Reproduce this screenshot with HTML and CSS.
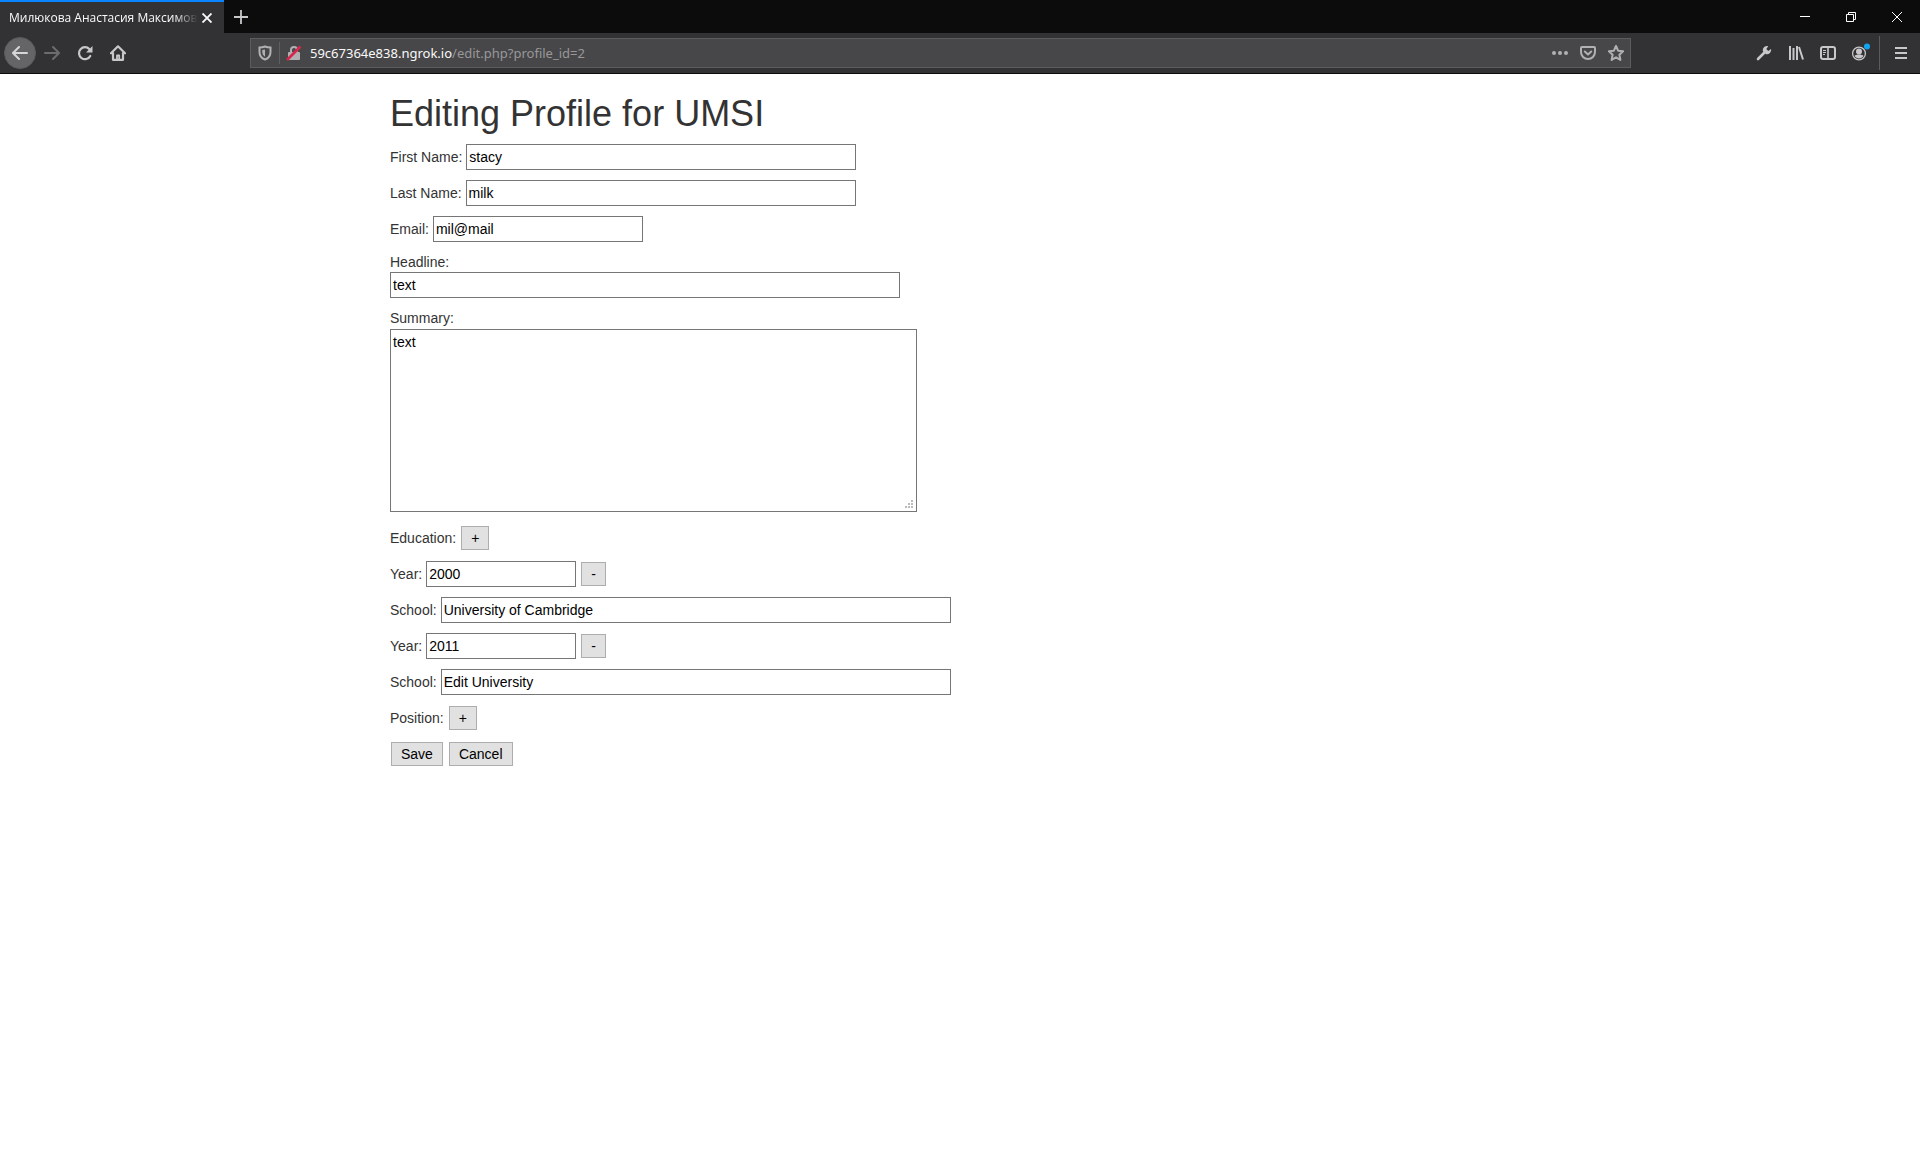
FILE: index.html
```html
<!DOCTYPE html>
<html lang="en">
<head>
<meta charset="utf-8">
<title>Милюкова Анастасия Максимовна</title>
<link rel="stylesheet" href="styles.css">
</head>
<body>
<header class="browser">
  <div class="tabbar">
    <div class="tab">
      <span class="tab-title">Милюкова Анастасия Максимовна</span>
      <button class="icon-btn tab-close" aria-label="Close tab"><svg width="10" height="10" viewBox="0 0 10 10"><path d="M.5.5l9 9M9.500.5l-9 9" stroke="#f9f9fa" stroke-width="1.900"/></svg></button>
    </div>
    <button class="icon-btn new-tab" aria-label="New tab"><svg width="14" height="14" viewBox="0 0 14 14"><path d="M7 0v14M0 7h14" stroke="#c8c8ca" stroke-width="1.800"/></svg></button>
    <div class="window-controls">
      <button class="icon-btn" aria-label="Minimize"><svg width="10" height="10" viewBox="0 0 10 10" shape-rendering="crispEdges"><path d="M0 4h10v1H0z" fill="#fff"/></svg></button>
      <button class="icon-btn" aria-label="Restore"><svg width="10" height="10" viewBox="0 0 10 10" fill="none" stroke="#fff"><path d="M.5 2.500h7v7h-7zM2.500 2.500v-2h7v7h-2"/></svg></button>
      <button class="icon-btn" aria-label="Close"><svg width="10" height="10" viewBox="0 0 10 10"><path d="M0 0l10 10M10 0L0 10" stroke="#fff"/></svg></button>
    </div>
  </div>
  <div class="toolbar">
    <nav class="nav">
      <button class="icon-btn back" aria-label="Back"><svg width="16" height="16" viewBox="0 0 16 16" fill="none" stroke="#d6d6d8" stroke-width="2" stroke-linecap="round" stroke-linejoin="round"><path d="M15 8H1.500M7 2L1 8l6 6"/></svg></button>
      <button class="icon-btn" aria-label="Forward"><svg width="16" height="16" viewBox="0 0 16 16" fill="none" stroke="#6c6c6e" stroke-width="2" stroke-linecap="round" stroke-linejoin="round"><path d="M1 8h13.500M9 2l6 6-6 6"/></svg></button>
      <button class="icon-btn" aria-label="Reload"><svg width="16" height="16" viewBox="0 0 16 16"><path d="M12.500 4.200A6 6 0 1 0 13.300 11" fill="none" stroke="#c8c8ca" stroke-width="2.200" stroke-linecap="round"/><path d="M15.500 1v6.500H9z" fill="#c8c8ca"/></svg></button>
      <button class="icon-btn" aria-label="Home"><svg width="16" height="16" viewBox="0 0 16 16" fill="none" stroke="#c8c8ca" stroke-width="2.200" stroke-linecap="round" stroke-linejoin="round"><path d="M1 8.300l7-7 7 7M3 8v6.800h10V8"/><path d="M7 15v-4.500h2.200V15" stroke-width="1.800"/></svg></button>
    </nav>
    <div class="urlbar">
      <svg width="16" height="16" viewBox="0 0 16 16"><path d="M8 1.500c2 .8 3.800 1 5.500 1V7c0 4-2.500 6.500-5.500 7.500C5 13.500 2.500 11 2.500 7V2.500c1.700 0 3.500-.2 5.500-1z" fill="none" stroke="#b1b1b3" stroke-width="2"/><path d="M8 4.500v7.200C6.300 10.600 5.300 9 5.300 7V5z" fill="#b1b1b3"/></svg>
      <span class="url-divider"></span>
      <svg width="16" height="16" viewBox="0 0 16 16"><path d="M5 8V5a3 3 0 0 1 6 0v3" fill="none" stroke="#b1b1b3" stroke-width="2"/><rect x="2" y="7" width="12" height="8" rx="1" fill="#b1b1b3"/><path d="M1 15L14.500 1.500" stroke="#d7264c" stroke-width="2.600"/></svg>
      <span class="url"><span class="host">59c67364e838.ngrok.io</span>/edit.php?profile_id=2</span>
      <span class="url-actions">
        <button class="icon-btn" aria-label="Page actions"><svg width="16" height="16" viewBox="0 0 16 16" fill="#b1b1b3"><circle cx="2" cy="8" r="2"/><circle cx="8" cy="8" r="2"/><circle cx="14" cy="8" r="2"/></svg></button>
        <button class="icon-btn" aria-label="Save to Pocket"><svg width="16" height="16" viewBox="0 0 16 16" fill="none" stroke="#b1b1b3" stroke-width="2" stroke-linecap="round" stroke-linejoin="round"><path d="M2 2h12q1 0 1 1v4a7 7 0 0 1-14 0V3q0-1 1-1z"/><path d="M4.800 6.500L8 9.500l3.200-3"/></svg></button>
        <button class="icon-btn" aria-label="Bookmark"><svg width="16" height="16" viewBox="0 0 16 16" fill="none" stroke="#b1b1b3" stroke-width="2" stroke-linejoin="round"><path d="M8 1l2.100 4.700 5 .6-3.700 3.500 1 5.100L8 12.300l-4.400 2.600 1-5.100L.9 6.300l5-.6z"/></svg></button>
      </span>
    </div>
    <div class="tools">
      <button class="icon-btn" aria-label="Developer tools"><svg width="16" height="16" viewBox="0 0 16 16"><path d="M2 14l7-7" stroke="#c8c8ca" stroke-width="2.600" stroke-linecap="round"/><path d="M15 4l-2.700 1.900-2-2L12.300 1.200A4.300 4.300 0 0 0 6.800 6L10 9.200A4.300 4.300 0 0 0 15 4z" fill="#c8c8ca"/></svg></button>
      <button class="icon-btn" aria-label="Library"><svg width="16" height="16" viewBox="0 0 16 16" fill="none" stroke="#c8c8ca" stroke-width="2"><path d="M2 1v14M5.500 3v12M9 1v14M11 2l4 12.500"/></svg></button>
      <button class="icon-btn" aria-label="Sidebars"><svg width="16" height="16" viewBox="0 0 16 16" fill="none" stroke="#c8c8ca"><rect x="1" y="2" width="14" height="12" rx="2" stroke-width="2"/><path d="M8 2v12" stroke-width="1.600"/><path d="M3 5.500h3M3 7.500h3M3 9.500h2"/></svg></button>
      <button class="icon-btn" aria-label="Account"><svg width="20" height="20" viewBox="0 0 20 20"><circle cx="9" cy="10.500" r="6.400" fill="none" stroke="#c8c8ca" stroke-width="1.300"/><circle cx="9" cy="8.500" r="3" fill="#c8c8ca"/><path d="M4.500 13c1-2 8-2 9 0-2 3.200-7 3.200-9 0z" fill="#c8c8ca"/><circle cx="17" cy="3.500" r="3" fill="#10a5f0"/></svg></button>
      <span class="tools-divider"></span>
      <button class="icon-btn" aria-label="Menu"><svg width="12" height="12" viewBox="0 0 12 12" fill="#c8c8ca"><path d="M0 0h12v2H0zM0 5h12v2H0zM0 10h12v2H0z"/></svg></button>
    </div>
  </div>
</header>
<main class="container">
  <h1>Editing Profile for UMSI</h1>
  <form>
    <div class="row"><label for="first">First Name:</label><input class="field name" id="first" type="text" value="stacy"></div>
    <div class="row"><label for="last">Last Name:</label><input class="field name" id="last" type="text" value="milk"></div>
    <div class="row"><label for="email">Email:</label><input class="field email" id="email" type="text" value="mil@mail"></div>
    <div class="stack"><label for="headline">Headline:</label><input class="field long" id="headline" type="text" value="text"></div>
    <div class="stack"><label for="summary">Summary:</label><textarea class="field summary" id="summary">text</textarea></div>
    <div class="row"><label for="add-edu">Education:</label><button class="btn" id="add-edu" type="button">+</button></div>
    <div class="row"><label for="year1">Year:</label><input class="field year" id="year1" type="text" value="2000"><button class="btn" type="button">-</button></div>
    <div class="row"><label for="school1">School:</label><input class="field long" id="school1" type="text" value="University of Cambridge"></div>
    <div class="row"><label for="year2">Year:</label><input class="field year" id="year2" type="text" value="2011"><button class="btn" type="button">-</button></div>
    <div class="row"><label for="school2">School:</label><input class="field long" id="school2" type="text" value="Edit University"></div>
    <div class="row"><label for="add-pos">Position:</label><button class="btn" id="add-pos" type="button">+</button></div>
    <div class="row"><button class="btn" type="button">Save</button><button class="btn" type="button">Cancel</button></div>
  </form>
</main>
</body>
</html>
```
FILE: styles.css
```css
* { box-sizing: border-box; }

body {
  margin: 0;
  background: #fff;
  color: #333;
  font: 14px/20px "Liberation Sans", Arial, sans-serif;
}

/* Browser chrome */
.browser {
  background: #323234;
  border-bottom: 1px solid #0c0c0d;
  font-family: "Noto Sans", "Open Sans", sans-serif;
}

.icon-btn {
  display: flex;
  align-items: center;
  justify-content: center;
  padding: 0;
  border: 0;
  background: none;
}

svg { display: block; flex: none; }

.tabbar {
  display: flex;
  height: 33px;
  background: #0c0c0d;
}

.tab {
  display: flex;
  align-items: center;
  width: 224px;
  padding: 0 8px 0 9px;
  border-top: 2px solid #0a84ff;
  background: #323234;
}

.tab-title {
  flex: 1;
  overflow: hidden;
  color: #f9f9fa;
  font-family: "Open Sans", "Noto Sans", sans-serif;
  font-size: 12px;
  white-space: nowrap;
  mask-image: linear-gradient(to left, transparent, #000 24px);
}

.tab-close { width: 18px; height: 18px; }
.new-tab { width: 34px; }

.window-controls { display: flex; margin-left: auto; }
.window-controls .icon-btn { width: 46px; }

.toolbar {
  display: flex;
  align-items: center;
  height: 40px;
}

.nav { display: flex; padding-left: 4px; }
.nav .icon-btn { width: 32px; height: 32px; margin-right: 1px; }
.nav .back { margin-right: 0; }

.nav .back {
  border: 1px solid #5a5a5c;
  border-radius: 50%;
  background: #656567;
}

.urlbar {
  display: flex;
  flex: 1;
  align-items: center;
  height: 30px;
  margin-left: 115px;
  padding: 0 6px;
  border: 1px solid #5c5c5e;
  background: #474749;
}

.url-divider {
  width: 1px;
  height: 22px;
  margin: 0 6px;
  background: #5f5f61;
}

.url {
  margin-left: 8px;
  color: #98989a;
  font-size: 13px;
  white-space: nowrap;
}

.host { color: #f9f9fa; }

.url-actions { display: flex; gap: 12px; margin-left: auto; }

.tools { display: flex; align-items: center; margin: 0 3px 0 117px; }
.tools .icon-btn { width: 32px; height: 32px; }

.tools-divider {
  width: 1px;
  height: 34px;
  margin: 0 5px 0 3px;
  background: #5c5c5e;
}

/* Page */
.container {
  max-width: 1170px;
  margin: 0 auto;
  padding: 20px 15px;
}

h1 {
  margin: 0 0 10px;
  font-size: 36px;
  font-weight: 500;
  line-height: 40px;
}

.row {
  display: flex;
  align-items: center;
  gap: 4px;
  height: 26px;
  margin-bottom: 10px;
}

.stack {
  display: flex;
  flex-direction: column;
  align-items: flex-start;
  margin-bottom: 10px;
}

.field {
  height: 26px;
  padding: 2px;
  border: 1px solid #767676;
  background: #fff;
  color: #000;
  font: inherit;
}

.name { width: 390px; }
.email { width: 210px; }
.year { width: 150px; }
.long { width: 510px; }

.summary {
  width: 527px;
  height: 183px;
  margin: 1px 0 3px;
}

/* Stepped dot grip in the text area's corner */
.summary::-webkit-resizer {
  background:
    linear-gradient(#bbb, #bbb) 10px 4px / 2px 2px no-repeat,
    linear-gradient(#bbb, #bbb) 7px 7px / 2px 2px no-repeat,
    linear-gradient(#bbb, #bbb) 10px 7px / 2px 2px no-repeat,
    linear-gradient(#bbb, #bbb) 4px 10px / 2px 2px no-repeat,
    linear-gradient(#bbb, #bbb) 7px 10px / 2px 2px no-repeat,
    linear-gradient(#bbb, #bbb) 10px 10px / 2px 2px no-repeat;
}

.btn {
  height: 24px;
  margin: 0 1px;
  padding: 0 9px;
  border: 1px solid #adadad;
  background: #e1e1e1;
  color: #000;
  font: inherit;
}
```
